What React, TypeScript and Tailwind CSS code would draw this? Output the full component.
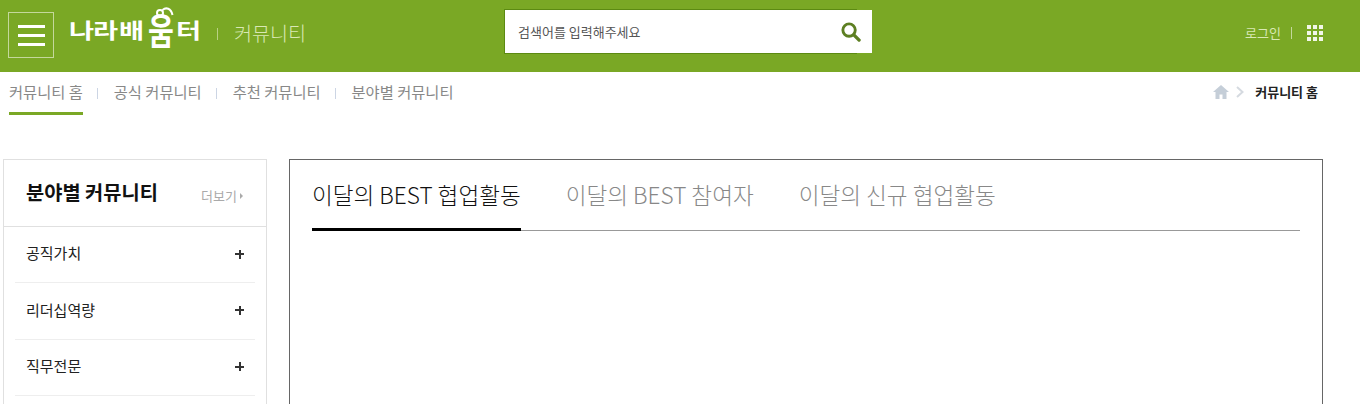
import React from "react";

const font = "font-['Noto_Sans_CJK_KR','Noto_Sans',sans-serif]";

const subMenus = ["커뮤니티 홈", "공식 커뮤니티", "추천 커뮤니티", "분야별 커뮤니티"];
const categories = ["공직가치", "리더십역량", "직무전문"];
const tabs = ["이달의 BEST 협업활동", "이달의 BEST 참여자", "이달의 신규 협업활동"];

function Logo() {
  return (
    <div className="relative ml-[15px] mt-[5px] flex h-[48px] w-[135px] items-center text-white font-bold">
      <span className="w-[24px] origin-left scale-x-[1.3] text-[21px] leading-[48px]">나</span>
      <span className="w-[26px] origin-left scale-x-[1.3] text-[21px] leading-[48px]">라</span>
      <span className="w-[29px] origin-left scale-x-[1.3] text-[21px] leading-[48px]">배</span>
      <span className="w-[28px] origin-left scale-x-[0.78] text-[36px] leading-[48px]">움</span>
      <span className="w-[25px] origin-left scale-x-[1.3] text-[21px] leading-[48px]">터</span>
      {/* 움 위의 곡선 */}
      <svg className="absolute left-[84px] top-[1px]" width="26" height="16" viewBox="0 0 26 16" fill="none">
        <circle cx="7" cy="7" r="3" stroke="#fff" strokeWidth="2" />
        <path d="M9.5 4C13 1 18 2 19.5 9" stroke="#fff" strokeWidth="2" />
      </svg>
    </div>
  );
}

function Header() {
  return (
    <header className="flex h-[72px] items-start bg-[#7aa825] pl-2">
      {/* 전체메뉴 버튼 */}
      <button className="mt-3 flex h-[46px] w-[46px] flex-col items-center justify-center gap-[6px] border border-[#c4d89c]">
        <span className="h-[3px] w-[27px] bg-white"></span>
        <span className="h-[3px] w-[27px] bg-white"></span>
        <span className="h-[3px] w-[27px] bg-white"></span>
      </button>

      <Logo />
      <span className="ml-[13px] mt-[28px] h-[12px] w-px bg-[#b9d184]"></span>
      <span className="ml-[16px] mt-[18px] w-[72px] text-[19.6px] leading-[30px] font-light whitespace-nowrap text-[#d9e8b4]">커뮤니티</span>

      {/* 검색 */}
      <div className="relative ml-[198px] mt-[9px] flex h-[45px] w-[368px]">
        <div className="flex h-[45px] w-[353px] items-center border-y border-l border-[#5c8a12] bg-white pl-[13px]">
          <span className="text-[13px] text-[#555]">검색어를 입력해주세요</span>
        </div>
        <div className="my-[1px] h-[43px] w-[15px] bg-white"></div>
        <svg className="absolute right-[11px] top-[12px]" width="21" height="21" viewBox="0 0 22 22" fill="none">
          <circle cx="9.5" cy="9.5" r="6.5" stroke="#5d7f22" strokeWidth="3" />
          <path d="M14.5 14.5 L20 20" stroke="#5d7f22" strokeWidth="3.5" strokeLinecap="round" />
        </svg>
      </div>

      {/* 로그인 */}
      <div className="ml-auto mt-[24px] flex items-center pr-[37px]">
        <span className="text-[13px] leading-[18px] text-[#d9e8b4]">로그인</span>
        <span className="ml-[10px] h-[12px] w-px bg-[#c4d89c]"></span>
        <div className="ml-[15px] grid grid-cols-3 gap-[2px]">
          {Array.from({ length: 9 }).map((_, index) => (
            <span key={index} className="h-[4px] w-[4px] bg-white/90"></span>
          ))}
        </div>
      </div>
    </header>
  );
}

function SubNav() {
  return (
    <nav className="flex h-[43px] items-start justify-between pl-[9px] pr-[42px]">
      <ul className="flex items-start">
        {subMenus.map((menu, index) => (
          <li key={menu} className="flex items-start">
            {index > 0 && <span className="ml-[14px] mr-[16px] mt-[16px] h-[11px] w-px bg-[#ccd5e4]"></span>}
            <span className={`h-[43px] pt-[8px] text-[15.3px] leading-[22px] whitespace-nowrap text-[#888] ${index === 0 ? "border-b-[3px] border-[#7aa825]" : ""}`}>
              {menu}
            </span>
          </li>
        ))}
      </ul>
      <div className="flex items-center pt-[10px]">
        <svg width="16" height="14" viewBox="0 0 16 14" fill="#c5ced8">
          <path d="M8 0 L16 7 H13.5 V14 H9.5 V9.5 H6.5 V14 H2.5 V7 H0 Z" />
        </svg>
        <svg className="ml-[7px]" width="8" height="12" viewBox="0 0 8 12" fill="none">
          <path d="M1 1 L6.5 6 L1 11" stroke="#d5dae0" strokeWidth="2" />
        </svg>
        <span className="ml-[11px] text-[13px] leading-[20px] font-bold text-[#222]">커뮤니티 홈</span>
      </div>
    </nav>
  );
}

function Sidebar() {
  return (
    <aside className="h-[245px] w-[264px] shrink-0 border border-b-0 border-[#e0e0e0]">
      <div className="flex h-[67px] items-center justify-between border-b border-[#e0e0e0] pl-[22px] pr-[23px]">
        <h2 className="mb-[2px] text-[19.8px] font-bold whitespace-nowrap text-[#111]">분야별 커뮤니티</h2>
        <span className="mt-[6px] flex items-center gap-[3px] text-[13px] whitespace-nowrap text-[#aaa]">
          더보기
          <span className="h-0 w-0 border-y-[3px] border-l-[3px] border-y-transparent border-l-[#aaa]"></span>
        </span>
      </div>
      <ul className="px-[11px]">
        {categories.map((category) => (
          <li key={category} className="flex h-[56.33px] items-center justify-between border-b border-[#eee] pl-[11px] pr-[11px]">
            <span className="mb-[2px] text-[15px] text-[#222]">{category}</span>
            <span className="relative mb-[1px] h-[9px] w-[9px]">
              <span className="absolute left-0 top-[3.5px] h-[2px] w-[9px] bg-[#333]"></span>
              <span className="absolute left-[3.5px] top-0 h-[9px] w-[2px] bg-[#333]"></span>
            </span>
          </li>
        ))}
      </ul>
    </aside>
  );
}

function BestPanel() {
  return (
    <section className="ml-[22px] h-[245px] w-[1034px] shrink-0 border border-b-0 border-[#666] px-[22px]">
      <ul className="flex h-[71px] gap-[45px] border-b border-[#999]">
        {tabs.map((tab, index) => (
          <li
            key={tab}
            className={`pt-[17px] text-[22.6px] leading-[36px] font-light whitespace-nowrap ${
              index === 0 ? "h-[71px] border-b-[3px] border-black text-[#111]" : "h-[70px] text-[#888]"
            }`}
          >
            {tab}
          </li>
        ))}
      </ul>
    </section>
  );
}

export default function App() {
  return (
    <div className={`h-[404px] w-[1360px] overflow-hidden bg-white ${font}`}>
      <Header />
      <SubNav />
      <main className="mt-[44px] flex pl-[3px]">
        <Sidebar />
        <BestPanel />
      </main>
    </div>
  );
}
